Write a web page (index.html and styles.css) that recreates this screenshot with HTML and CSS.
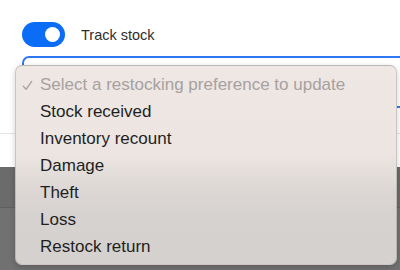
FILE: index.html
```html
<!DOCTYPE html>
<html lang="en">
<head>
<meta charset="utf-8">
<title>Track stock</title>
<link rel="stylesheet" href="styles.css">
</head>
<body>
<div class="page">
  <section class="panel">
    <div class="toggle-row">
      <span class="switch"><span class="knob"></span></span>
      <span class="label">Track stock</span>
    </div>
    <div class="select"></div>
  </section>
  <div class="divider"></div>
  <div class="backdrop">
    <div class="band"></div>
  </div>
  <ul class="menu">
    <li class="item disabled">
      <span class="check"><svg width="11" height="11" viewBox="0 0 12 12"><polyline points="1.5,6.8 4.5,10.2 10.5,1.5" fill="none" stroke="#a8a2a0" stroke-width="1.5" stroke-linecap="round" stroke-linejoin="round"/></svg></span>
      <span class="text">Select a restocking preference to update</span>
    </li>
    <li class="item"><span class="check"></span><span class="text">Stock received</span></li>
    <li class="item"><span class="check"></span><span class="text">Inventory recount</span></li>
    <li class="item"><span class="check"></span><span class="text">Damage</span></li>
    <li class="item"><span class="check"></span><span class="text">Theft</span></li>
    <li class="item"><span class="check"></span><span class="text">Loss</span></li>
    <li class="item"><span class="check"></span><span class="text">Restock return</span></li>
  </ul>
</div>
</body>
</html>
```
FILE: styles.css
```css
html, body {
  margin: 0;
  padding: 0;
  background: #ffffff;
  font-family: "Liberation Sans", Arial, sans-serif;
  overflow: hidden;
}
.page {
  position: relative;
  width: 400px;
  height: 270px;
  overflow: hidden;
}
.panel {
  padding: 22px 0 0 22px;
}
.toggle-row {
  display: flex;
  align-items: center;
  gap: 16px;
  height: 25px;
}
.switch {
  position: relative;
  width: 43px;
  height: 25px;
  border-radius: 13px;
  background: #0b6cf6;
  flex: none;
}
.knob {
  position: absolute;
  top: 5px;
  right: 5px;
  width: 15px;
  height: 15px;
  border-radius: 50%;
  background: #ffffff;
}
.label {
  font-size: 14.5px;
  color: #2e2e2e;
  margin-top: 1px;
}
.select {
  margin-top: 9px;
  margin-right: -40px;
  height: 48px;
  border: 2px solid #2f78f3;
  border-radius: 7px;
  background: #ffffff;
}
.divider {
  margin-top: 25px;
  height: 33px;
  border-top: 1px solid #e4e4e4;
}
.backdrop {
  height: 103px;
  background: linear-gradient(to bottom, #6b6b6b 0px, #6b6b6b 40px, #717171 41px, #717171 100%);
  padding-top: 40px;
  box-sizing: border-box;
}
.band {
  height: 1px;
  background: #5f5f5f;
}
.menu {
  position: absolute;
  left: 15px;
  top: 65px;
  width: 382px;
  height: 200px;
  box-sizing: border-box;
  margin: 0;
  padding: 5px 0 0 0;
  list-style: none;
  border: 1px solid rgba(120, 110, 105, 0.28);
  border-radius: 7px;
  background: linear-gradient(to bottom, #eee7e4 0px, #ece5e2 88px, #dcd7d4 125px, #d6d2cf 150px, #d5d1ce 200px);
  box-shadow: 0 2px 6px rgba(0, 0, 0, 0.18);
}
.item {
  display: flex;
  align-items: center;
  height: 27px;
  font-size: 17px;
  color: #1f1f1f;
}
.check {
  width: 24px;
  flex: none;
  display: flex;
  justify-content: flex-end;
  box-sizing: border-box;
}
.check svg {
  display: block;
  margin-right: 7px;
  margin-top: 2px;
}
.item.disabled {
  color: #a7a19f;
}
```
